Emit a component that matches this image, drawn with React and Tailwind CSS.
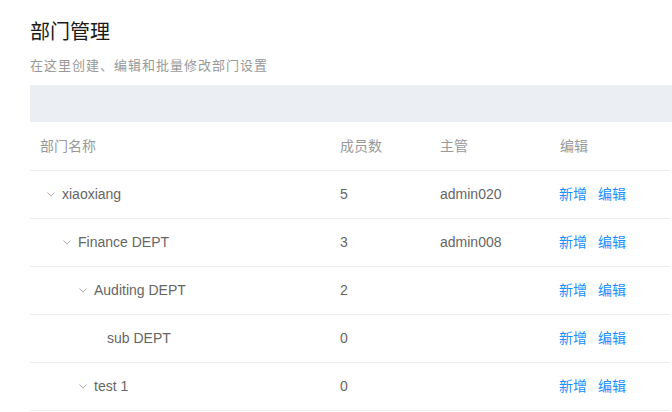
import React from "react";

const font = { fontFamily: '"Liberation Sans", "Noto Sans CJK SC", sans-serif' };

const rows = [
  { name: "xiaoxiang", level: 0, count: "5", mgr: "admin020", expand: true },
  { name: "Finance DEPT", level: 1, count: "3", mgr: "admin008", expand: true },
  { name: "Auditing DEPT", level: 2, count: "2", mgr: "", expand: true },
  { name: "sub DEPT", level: 3, count: "0", mgr: "", expand: false },
  { name: "test 1", level: 2, count: "0", mgr: "", expand: true },
];

const indents = ["w-0", "w-[16px]", "w-[32px]", "w-[48px]"];

function Chevron() {
  return (
    <svg width="8" height="5" viewBox="0 0 8 5" className="block">
      <polyline points="0.5,0.5 4,4.2 7.5,0.5" fill="none" stroke="#a8a8a8" strokeWidth="1" />
    </svg>
  );
}

export default function App() {
  return (
    <div className="w-[672px] h-[412px] overflow-hidden bg-white" style={font}>
      <div className="pl-[30px]">
        <div className="pt-[20px] h-[44px] text-[20px] leading-[24px] text-[#1a1a1a]">部门管理</div>
        <div className="mt-[12px] h-[20px] text-[13px] tracking-[1px] leading-[20px] text-[#999]">在这里创建、编辑和批量修改部门设置</div>
        <div className="mt-[9px] h-[37px] bg-[#ebeef3]" />
        <div className="w-[640px]">
          <div className="flex h-[49px] items-center border-b border-[#ebebf0] text-[14px] text-[#999]">
            <div className="w-[300px] pl-[10px]">部门名称</div>
            <div className="w-[100px] pl-[10px]">成员数</div>
            <div className="w-[120px] pl-[10px]">主管</div>
            <div className="w-[120px] pl-[10px]">编辑</div>
          </div>
          {rows.map((r, i) => (
            <div key={i} className="flex h-[48px] items-center border-b border-[#ebebf0] text-[14px] text-[#666]">
              <div className="w-[300px] pl-[10px] flex items-center">
                <div className={indents[r.level]} />
                {r.expand ? (
                  <div className="w-[22px] flex items-center pl-[7px]">
                    <Chevron />
                  </div>
                ) : (
                  <div className="w-[19px]" />
                )}
                <span>{r.name}</span>
              </div>
              <div className="w-[100px] pl-[10px]">{r.count}</div>
              <div className="w-[120px] pl-[10px]">{r.mgr}</div>
              <div className="w-[120px] pl-[9px] flex text-[#1890ff]">
                <span>新增</span>
                <span className="ml-[11px]">编辑</span>
              </div>
            </div>
          ))}
        </div>
      </div>
    </div>
  );
}
